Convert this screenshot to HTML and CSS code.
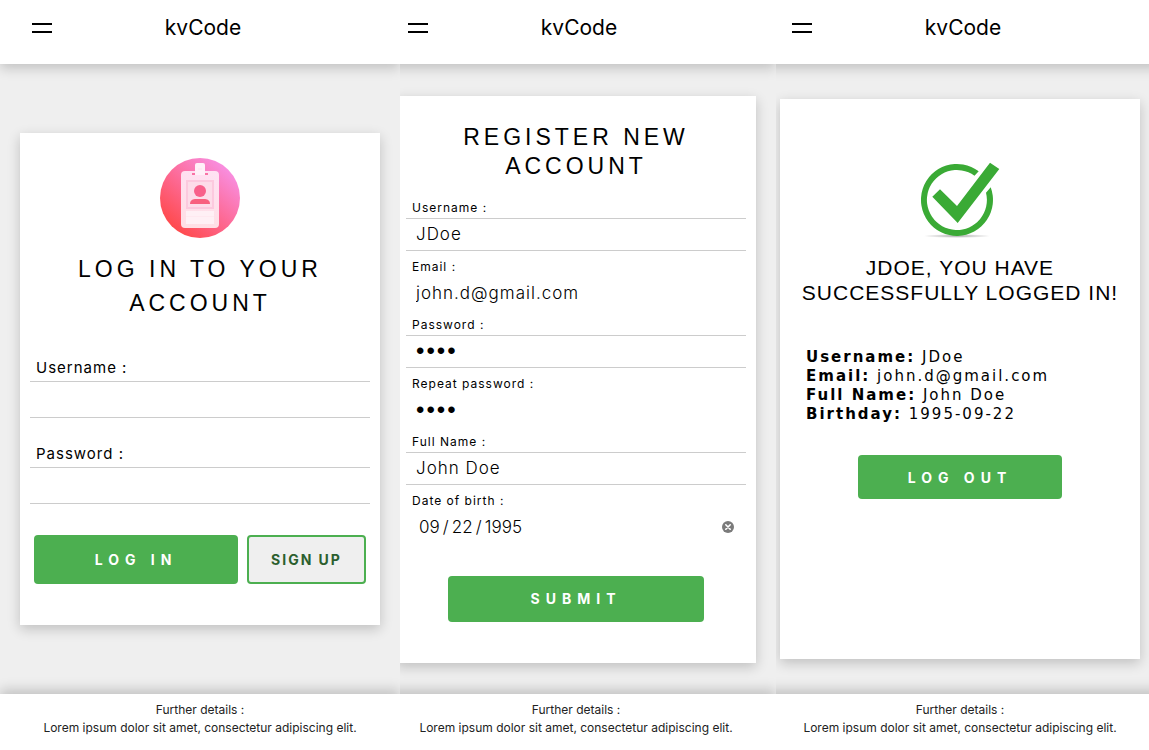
FILE: index.html
```html
<!DOCTYPE html>
<html lang="en">
<head>
<meta charset="utf-8">
<meta name="viewport" content="width=device-width, initial-scale=1">
<title>kvCode</title>
<link rel="stylesheet" href="styles.css">
</head>
<body>
<div class="panel">
  <div class="screen">
    <header class="topbar">
      <button class="menu" type="button" aria-label="Menu"><span></span><span></span></button>
      <div class="brand">kvCode</div>
    </header>
    <main class="stage">
      <form class="card card-login">
        <svg class="picture" viewBox="0 0 80 80" aria-hidden="true">
          <defs>
            <linearGradient id="disc" x1="0.15" y1="0.9" x2="0.85" y2="0.1">
              <stop offset="0" stop-color="#ff4848"/>
              <stop offset="0.5" stop-color="#fd6a96"/>
              <stop offset="1" stop-color="#f890e4"/>
            </linearGradient>
            <linearGradient id="badge" x1="0" y1="0" x2="0" y2="1">
              <stop offset="0" stop-color="#ffe6f5"/>
              <stop offset="1" stop-color="#ffe6eb"/>
            </linearGradient>
          </defs>
          <circle cx="40" cy="40" r="40" fill="url(#disc)"/>
          <rect x="21" y="13" width="38" height="57" rx="4" fill="url(#badge)" opacity="0.95"/>
          <path d="M32 15h3v2h-3zM45 15h3v2h-3z" fill="#f973a5"/>
          <path d="M37 5h6a2 2 0 0 1 2 2v10H35V7a2 2 0 0 1 2-2z" fill="#fff0f8"/>
          <path d="M38 10h4v2h-4z" fill="#fdeaf3"/>
          <rect x="26" y="22" width="28" height="29" fill="#fcc9de"/>
          <rect x="28" y="24" width="24" height="25" fill="#fddce9"/>
          <circle cx="40" cy="33" r="6" fill="#f8608a"/>
          <path d="M30 46c0-4 3-5 6-5h8c3 0 6 1 6 5z" fill="#f8607f"/>
          <path d="M26 53h28v13H26z" fill="#fff0f5"/>
          <path d="M26 58h28v1H26z" fill="#ffe9f0"/>
        </svg>
        <h1 class="title">LOG IN TO YOUR ACCOUNT</h1>
        <div class="field">
          <label for="login-user">Username :</label>
          <input id="login-user" type="text">
        </div>
        <div class="field">
          <label for="login-pass">Password :</label>
          <input id="login-pass" type="password">
        </div>
        <div class="actions">
          <button class="btn" type="button">LOG IN</button>
          <button class="btn btn-outline" type="button">SIGN UP</button>
        </div>
      </form>
    </main>
    <footer class="footer">
      <p>Further details :</p>
      <p>Lorem ipsum dolor sit amet, consectetur adipiscing elit.</p>
    </footer>
  </div>
</div>

<div class="panel">
  <div class="screen screen-register">
    <header class="topbar">
      <button class="menu" type="button" aria-label="Menu"><span></span><span></span></button>
      <div class="brand">kvCode</div>
    </header>
    <main class="stage">
      <form class="card card-register">
        <h1 class="title">REGISTER NEW ACCOUNT</h1>
        <div class="field">
          <label for="reg-user">Username :</label>
          <input id="reg-user" type="text" value="JDoe">
        </div>
        <div class="field plain">
          <label for="reg-email">Email :</label>
          <input id="reg-email" type="email" value="john.d@gmail.com">
        </div>
        <div class="field">
          <label for="reg-pass">Password :</label>
          <input id="reg-pass" type="password" value="1234">
        </div>
        <div class="field plain">
          <label for="reg-repeat">Repeat password :</label>
          <input id="reg-repeat" type="password" value="1234">
        </div>
        <div class="field">
          <label for="reg-name">Full Name :</label>
          <input id="reg-name" type="text" value="John Doe">
        </div>
        <div class="field plain">
          <label for="reg-birth">Date of birth :</label>
          <div class="date">
            <input id="reg-birth" type="text" value="09&#8201;/&#8201;22&#8201;/&#8201;1995">
            <button class="clear" type="button" aria-label="Clear date">
              <svg viewBox="0 0 12 12" aria-hidden="true">
                <circle cx="6" cy="6" r="6" fill="#7b7b7b"/>
                <path d="M3.8 3.8l4.4 4.4M8.2 3.8L3.8 8.2" stroke="#fff" stroke-width="1.6" stroke-linecap="round"/>
              </svg>
            </button>
          </div>
        </div>
        <button class="btn" type="button">SUBMIT</button>
      </form>
    </main>
    <footer class="footer">
      <p>Further details :</p>
      <p>Lorem ipsum dolor sit amet, consectetur adipiscing elit.</p>
    </footer>
  </div>
</div>

<div class="panel">
  <div class="screen screen-welcome">
    <header class="topbar">
      <button class="menu" type="button" aria-label="Menu"><span></span><span></span></button>
      <div class="brand">kvCode</div>
    </header>
    <main class="stage">
      <section class="card card-welcome">
        <svg class="picture" viewBox="0 0 80 80" aria-hidden="true">
          <defs>
            <radialGradient id="ground">
              <stop offset="0" stop-color="#aaa"/>
              <stop offset="1" stop-color="#fff"/>
            </radialGradient>
          </defs>
          <ellipse cx="37" cy="76" rx="34" ry="2" fill="url(#ground)"/>
          <path d="M58.7 11.2A36 36 0 1 0 70.7 27.3L66 32.7A30 30 0 1 1 54.5 15.7Z" fill="#3aaa35"/>
          <path d="M12.3 36.7L20 29.3L37 46L70 2.7L79.3 9L37.7 63Z" fill="#3aaa35"/>
        </svg>
        <h1 class="title">JDOE, YOU HAVE SUCCESSFULLY LOGGED IN!</h1>
        <div class="details">
          <p><b>Username:</b> JDoe</p>
          <p><b>Email:</b> john.d@gmail.com</p>
          <p><b>Full Name:</b> John Doe</p>
          <p><b>Birthday:</b> 1995-09-22</p>
        </div>
        <button class="btn" type="button">LOG OUT</button>
      </section>
    </main>
    <footer class="footer">
      <p>Further details :</p>
      <p>Lorem ipsum dolor sit amet, consectetur adipiscing elit.</p>
    </footer>
  </div>
</div>
</body>
</html>
```

FILE: styles.css
```css
* {
  box-sizing: border-box;
}

body {
  margin: 0;
  min-height: 100vh;
  display: grid;
  grid-template-columns: 400fr 376fr 373fr;
  background: #efefef;
  color: #000;
  font-family: Inter, "Liberation Sans", sans-serif;
}

h1,
p {
  margin: 0;
}

/* Each panel shows a screen; neighbours trim its outer edges. */
.panel {
  display: grid;
  overflow: hidden;
}

.screen {
  display: flex;
  flex-direction: column;
}

.screen-register {
  margin-left: -24px;
}

.screen-welcome {
  margin-left: -16px;
  margin-right: -11px;
}

.topbar {
  display: grid;
  grid-template-columns: 20px 1fr 20px;
  align-items: center;
  height: 64px;
  padding: 0 26px 8px 32px;
  background: #fff;
  box-shadow: 0 4px 12px rgba(0, 0, 0, 0.2);
}

.menu {
  display: grid;
  gap: 6px;
  padding: 0;
  border: 0;
  background: none;
}

.menu span {
  height: 2px;
  background: #000;
}

.brand {
  font-size: 21px;
  line-height: 28px;
  text-align: center;
}

.stage {
  flex: 1;
  display: flex;
  flex-direction: column;
  justify-content: center;
  padding: 0 20px;
}

.card {
  display: flex;
  flex-direction: column;
  background: #fff;
  box-shadow: 0 4px 12px rgba(0, 0, 0, 0.2);
}

.card-login {
  padding: 25px 10px 41px;
}

.card-register {
  padding: 27px 10px 41px;
}

.card-welcome {
  padding: 61px 20px 160px;
}

.picture {
  align-self: center;
  width: 80px;
  height: 80px;
}

.title {
  font-family: "Liberation Sans", Arial, sans-serif;
  font-size: 23px;
  font-weight: 400;
  letter-spacing: 4px;
  text-align: center;
}

.card-login .title {
  margin: 14px 30px 35px;
  line-height: 34px;
}

.card-register .title {
  margin: 0 30px 11px;
  line-height: 29px;
}

.card-welcome .title {
  margin: 15px 0 43px;
  font-size: 21px;
  line-height: 25px;
  letter-spacing: 1px;
}

.field {
  display: grid;
}

.field label {
  padding-left: 6px;
  font-size: 15px;
  line-height: 26px;
  letter-spacing: 1px;
}

.field input {
  width: 100%;
  height: 37px;
  padding: 0 10px;
  border: solid #ccc;
  border-width: 1px 0;
  border-radius: 0;
  background: #fff;
  color: #000;
  font-family: Inter, "Open Sans", sans-serif;
  font-size: 17px;
  font-weight: 300;
  letter-spacing: 1px;
}

.field input[type="password"] {
  font-family: "DejaVu Sans", sans-serif;
  font-size: 24px;
  letter-spacing: 2px;
}

.card-login .field + .field {
  margin-top: 23px;
}

.card-register label {
  padding-top: 6px;
  font-size: 12px;
  line-height: 20px;
}

.card-register input {
  height: 33px;
}

.card-register .plain input {
  height: 32px;
  border-color: transparent;
}

.date {
  display: grid;
  grid-template-columns: 1fr 24px;
  align-items: center;
}

.date input {
  padding-left: 13px;
  letter-spacing: 0;
}

.clear {
  display: flex;
  width: 12px;
  height: 12px;
  padding: 0;
  border: 0;
  background: none;
}

.clear svg {
  width: 12px;
  height: 12px;
}

.btn {
  border: 0;
  border-radius: 4px;
  background: #4caf50;
  color: #fff;
  font-family: Inter, "Open Sans", sans-serif;
  font-size: 14px;
  font-weight: 700;
  letter-spacing: 6px;
}

.actions {
  display: grid;
  grid-template-columns: 204fr 119fr;
  gap: 9px;
  margin: 31px 4px 0;
}

.actions .btn {
  height: 49px;
}

.actions .btn-outline {
  border: 2px solid #4caf50;
  background: #efefef;
  color: #2b5f2e;
  letter-spacing: 2px;
}

.card-register .btn {
  height: 46px;
  margin: 33px 42px 0;
}

.card-welcome .btn {
  height: 44px;
  margin: 31px 58px 0;
}

.details {
  padding-left: 6px;
  font-family: "DejaVu Sans", Verdana, sans-serif;
  font-size: 15px;
  line-height: 19px;
  letter-spacing: 2px;
}

.footer {
  height: 56px;
  padding-top: 7px;
  background: #fff;
  box-shadow: 0 -4px 12px rgba(0, 0, 0, 0.2);
  color: #222;
  font-size: 12px;
  line-height: 18px;
  text-align: center;
}
```
